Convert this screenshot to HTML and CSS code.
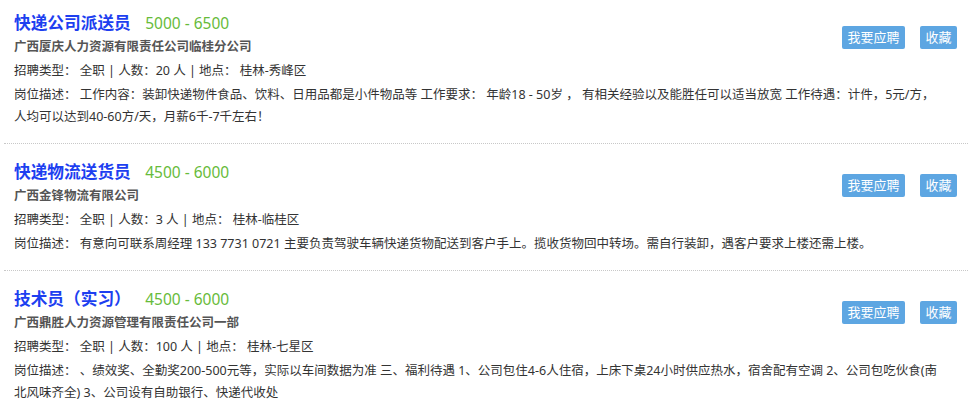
FILE: index.html
```html
<!DOCTYPE html>
<html lang="zh-CN">
<head>
  <meta charset="UTF-8" />
  <title>招聘信息</title>
  <link rel="stylesheet" href="styles.css">
</head>
<body>
  <ul class="job-list">
    <li class="job">
      <div class="job-info">
        <h3 class="job-title">快递公司派送员 <span class="salary">5000 - 6500</span></h3>
        <p class="company">广西厦庆人力资源有限责任公司临桂分公司</p>
        <p>招聘类型： 全职 | 人数：20 人 | 地点： 桂林-秀峰区</p>
        <p>岗位描述： 工作内容：装卸快递物件食品、饮料、日用品都是小件物品等 工作要求： 年龄18 - 50岁 ， 有相关经验以及能胜任可以适当放宽 工作待遇：计件，5元/方，人均可以达到40-60方/天，月薪6千-7千左右！</p>
      </div>
      <div class="job-actions">
        <button class="btn">我要应聘</button>
        <button class="btn">收藏</button>
      </div>
    </li>
    <li class="job">
      <div class="job-info">
        <h3 class="job-title">快递物流送货员 <span class="salary">4500 - 6000</span></h3>
        <p class="company">广西金锋物流有限公司</p>
        <p>招聘类型： 全职 | 人数：3 人 | 地点： 桂林-临桂区</p>
        <p>岗位描述： 有意向可联系周经理 133 7731 0721 主要负责驾驶车辆快递货物配送到客户手上。揽收货物回中转场。需自行装卸，遇客户要求上楼还需上楼。</p>
      </div>
      <div class="job-actions">
        <button class="btn">我要应聘</button>
        <button class="btn">收藏</button>
      </div>
    </li>
    <li class="job">
      <div class="job-info">
        <h3 class="job-title">技术员（实习） <span class="salary">4500 - 6000</span></h3>
        <p class="company">广西鼎胜人力资源管理有限责任公司一部</p>
        <p>招聘类型： 全职 | 人数：100 人 | 地点： 桂林-七星区</p>
        <p>岗位描述： 、绩效奖、全勤奖200-500元等，实际以车间数据为准 三、福利待遇 1、公司包住4-6人住宿，上床下桌24小时供应热水，宿舍配有空调 2、公司包吃伙食(南北风味齐全) 3、公司设有自助银行、快递代收处</p>
      </div>
      <div class="job-actions">
        <button class="btn">我要应聘</button>
        <button class="btn">收藏</button>
      </div>
    </li>
  </ul>
</body>
</html>
```

FILE: styles.css
```css
html, body {
  margin: 0;
  padding: 0;
  background: #fff;
  font-family: "Noto Sans", "Noto Sans CJK SC", sans-serif;
  color: #333;
}
.job-list {
  list-style: none;
  margin: 0 4px;
  padding: 0;
}
.job {
  position: relative;
  padding: 17px 11px 15px 10px;
  border-bottom: 1px dotted #c8c8c8;
}
.job:first-child {
  padding-top: 12px;
}
.job-info {
  padding-right: 15px;
}
.job-info p {
  margin: 2px 0 0;
  font-size: 12.5px;
  line-height: 22px;
}
.job-title {
  margin: 0;
  font-size: 16.7px;
  line-height: 22px;
  font-weight: bold;
  color: #1d3ff0;
}
.salary {
  margin-left: 10px;
  font-size: 15.5px;
  font-weight: normal;
  color: #67bb3a;
}
.job-info .company {
  font-weight: bold;
  color: #555;
}
.job-actions {
  position: absolute;
  top: 0;
  right: 11px;
  display: flex;
  gap: 15px;
  margin-top: 30px;
}
.job:first-child .job-actions {
  margin-top: 26px;
}
.btn {
  height: 23px;
  padding: 0 5.5px;
  font-family: inherit;
  font-size: 13px;
  line-height: 23px;
  color: #fff;
  background: #5da6e2;
  border: none;
  border-radius: 2px;
}
```
